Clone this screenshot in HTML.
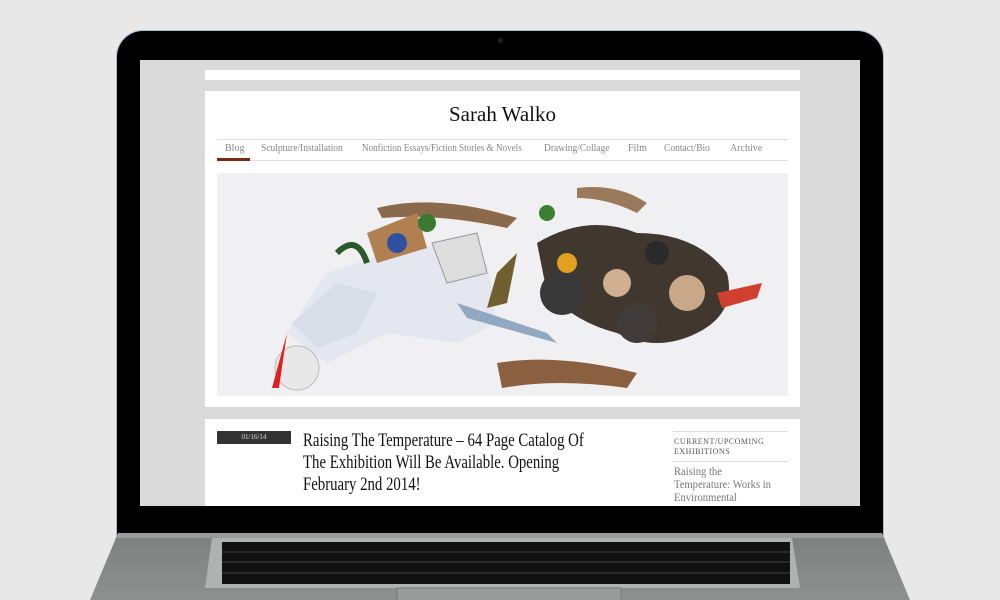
<!DOCTYPE html>
<html><head><style>
body{margin:0;width:1000px;height:600px;background:#e8e8e8;overflow:hidden;position:relative;font-family:"Liberation Serif",serif}
.abs{position:absolute}
.n{position:absolute;display:inline-block;top:143px;font-size:10px;color:#888;white-space:nowrap;transform-origin:left top}
</style></head><body>
<div class="abs" style="left:117px;top:31px;width:766px;height:520px;background:#000;border-radius:26px 26px 0 0;box-shadow:0 0 0 1px #a9c0cc"></div>
<div class="abs" style="left:140px;top:60px;width:720px;height:446px;background:#dadada"></div>
<div class="abs" style="left:498px;top:38px;width:5px;height:5px;border-radius:50%;background:#222"></div>
<div class="abs" style="left:205px;top:70px;width:595px;height:10px;background:#fff"></div>
<div class="abs" style="left:205px;top:91px;width:595px;height:316px;background:#fff"></div>
<div class="abs" style="left:205px;top:102px;width:595px;text-align:center;font-size:21px;color:#111">Sarah Walko</div>
<div class="abs" style="left:217px;top:139px;width:571px;height:1px;background:#ddd"></div>
<div class="abs" style="left:217px;top:160px;width:571px;height:1px;background:#ddd"></div>
<div class="abs" style="left:217px;top:158px;width:33px;height:3px;background:#7a2a10"></div>
<span class="n" style="left:225px">Blog</span>
<span class="n" style="left:261px;transform:scaleX(0.95)">Sculpture/Installation</span>
<span class="n" style="left:362px;transform:scaleX(0.91)">Nonfiction Essays/Fiction Stories &amp; Novels</span>
<span class="n" style="left:544px;transform:scaleX(0.95)">Drawing/Collage</span>
<span class="n" style="left:628px">Film</span>
<span class="n" style="left:664px;transform:scaleX(0.95)">Contact/Bio</span>
<span class="n" style="left:730px">Archive</span>
<svg class="abs" style="left:217px;top:173px" width="571" height="223" viewBox="0 0 571 223">
<rect width="571" height="223" fill="#f0f0f2"/>
<path d="M70 160 L110 100 L170 80 L230 70 L270 90 L280 150 L240 170 L170 160 L110 190 Z" fill="#e4e6f0"/>
<path d="M75 150 L120 110 L160 120 L140 160 L100 175 Z" fill="#d8dde8"/>
<circle cx="80" cy="195" r="22" fill="#e8e8e8" stroke="#bbb"/>
<path d="M55 215 L70 160 L62 215Z" fill="#e02020"/>
<path d="M160 35 Q220 20 300 45 L290 55 Q220 40 165 45Z" fill="#8a6a4a"/>
<path d="M150 60 L200 40 L210 75 L160 90Z" fill="#b08050"/>
<circle cx="180" cy="70" r="10" fill="#3050a0"/>
<circle cx="210" cy="50" r="9" fill="#3a7a30"/>
<path d="M215 70 L260 60 L270 100 L230 110Z" fill="#ddd" stroke="#999"/>
<path d="M280 100 L300 80 L290 130 L270 135Z" fill="#706030"/>
<path d="M240 130 L330 160 L340 170 L250 145Z" fill="#90a8c0"/>
<path d="M280 190 Q340 180 420 200 L410 215 Q340 205 285 215Z" fill="#8a6040"/>
<path d="M320 70 Q370 40 420 60 Q480 60 510 100 Q520 140 480 160 Q440 180 400 160 Q360 150 330 120 Z" fill="#40382e"/>
<circle cx="345" cy="120" r="22" fill="#383838"/>
<circle cx="420" cy="150" r="20" fill="#403a38"/>
<circle cx="470" cy="120" r="18" fill="#c9a88a"/>
<circle cx="400" cy="110" r="14" fill="#d0b090"/>
<circle cx="350" cy="90" r="10" fill="#e0a020"/>
<circle cx="440" cy="80" r="12" fill="#2a2a2a"/>
<path d="M360 15 Q400 10 430 30 L420 40 Q390 25 360 25Z" fill="#9a7a5a"/>
<path d="M500 120 L545 110 L540 125 L505 135Z" fill="#d04030"/>
<circle cx="330" cy="40" r="8" fill="#3a8030"/>
<path d="M120 80 Q140 60 150 90" fill="none" stroke="#2a5a2a" stroke-width="6"/>
</svg>
<div class="abs" style="left:205px;top:419px;width:595px;height:87px;background:#fff"></div>
<div class="abs" style="left:217px;top:431px;width:74px;height:13px;background:#333;color:#ddd;font-size:7px;text-align:center;line-height:13px">01/16/14</div>
<div class="abs" style="left:303px;top:430px;width:360px;font-size:18.5px;line-height:22px;color:#111;transform:scaleX(0.8);transform-origin:left top">Raising The Temperature – 64 Page Catalog Of The Exhibition Will Be Available. Opening February 2nd 2014!</div>
<div class="abs" style="left:673px;top:431px;width:115px;height:1px;background:#ddd"></div>
<div class="abs" style="left:673px;top:461px;width:115px;height:1px;background:#ddd"></div>
<div class="abs" style="left:674px;top:437px;font-size:8px;line-height:10px;letter-spacing:0.5px;color:#555">CURRENT/UPCOMING<br>EXHIBITIONS</div>
<div class="abs" style="left:674px;top:466px;font-size:11.5px;line-height:13px;color:#777;width:130px;transform:scaleX(0.92);transform-origin:left">Raising the<br>Temperature: Works in<br>Environmental</div>
<div class="abs" style="left:117px;top:506px;width:766px;height:27px;background:#000"></div>
<svg class="abs" style="left:0;top:530px" width="1000" height="70" viewBox="0 0 1000 70">
<defs><linearGradient id="g" x1="0" y1="0" x2="0" y2="1"><stop offset="0" stop-color="#7e8080"/><stop offset="1" stop-color="#8e9090"/></linearGradient></defs>
<path d="M118 3 L882 3 L910 70 L90 70 Z" fill="url(#g)"/>
<path d="M118 3 L882 3 L884 8 L116 8Z" fill="#9a9c9c"/>
<path d="M212 8 L792 8 L800 58 L205 58 Z" fill="#b0b2b2"/>
<rect x="222" y="12" width="568" height="42" fill="#111"/>
<g stroke="#444" stroke-width="1">
<line x1="222" y1="22" x2="790" y2="22"/><line x1="222" y1="32" x2="790" y2="32"/><line x1="222" y1="43" x2="790" y2="43"/>
</g>
<rect x="397" y="58" width="224" height="14" fill="#9a9c9c" stroke="#777"/>
</svg>
</body></html>
